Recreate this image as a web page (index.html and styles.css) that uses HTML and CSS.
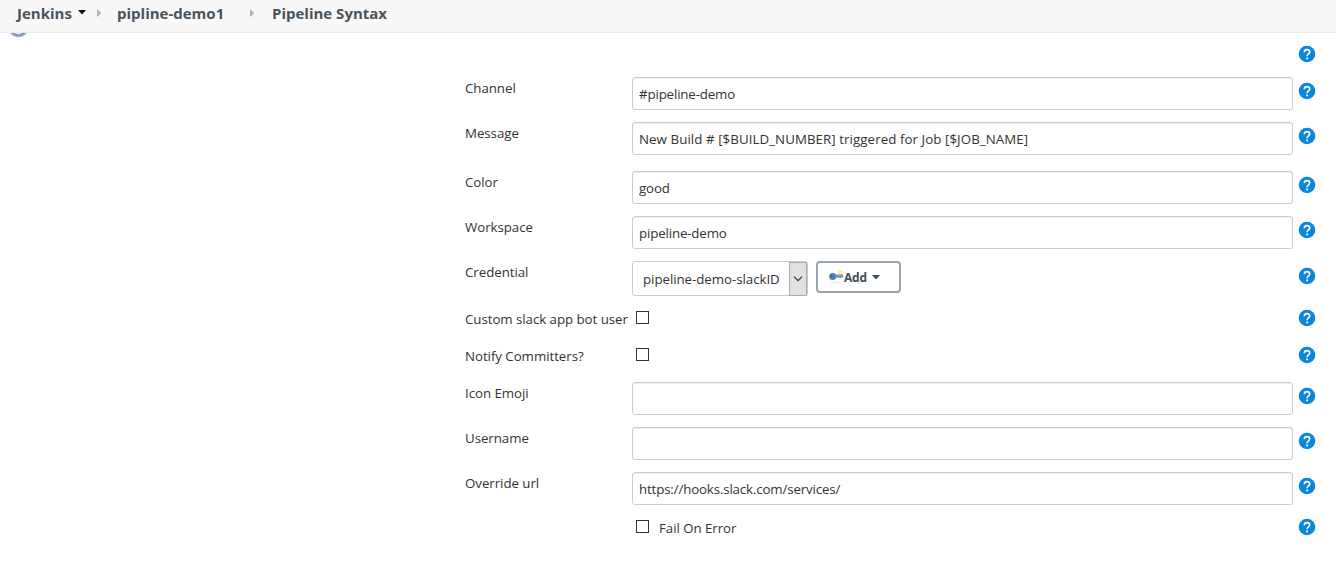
FILE: index.html
```
<!DOCTYPE html>
<html lang="en">
<head>
<meta charset="utf-8">
<title>Pipeline Syntax</title>
<link rel="stylesheet" href="styles.css">
</head>
<body>
<svg class="defs" width="0" height="0">
  <symbol id="help" viewBox="0 0 17 17">
    <circle cx="8" cy="8" r="8.300" fill="#0b87da"/>
    <path d="M5.300 6.200C5.300 4.500 6.500 3.600 8 3.600s2.700.9 2.700 2.400c0 1.900-2.600 1.900-2.600 4.200" fill="none" stroke="#fff" stroke-width="1.600"/>
    <rect x="7.200" y="11.500" width="1.800" height="1.800" fill="#fff"/>
  </symbol>
</svg>
<header class="crumbs">
  <span class="c1">Jenkins</span>
  <svg class="caret" width="8" height="5"><path d="M0 0h8L4 4.5z" fill="#111"/></svg>
  <svg class="sep s1" width="5" height="8"><path d="M0 0l4.5 4L0 8z" fill="#b8b5b0"/></svg>
  <span class="c2">pipline-demo1</span>
  <svg class="sep s2" width="5" height="8"><path d="M0 0l4.5 4L0 8z" fill="#b8b5b0"/></svg>
  <span class="c3">Pipeline Syntax</span>
</header>
<svg class="side-icon" width="18" height="5" viewBox="0 0 18 5"><path d="M0 0h17Q14 4.3 8.500 4.300T0 0z" fill="#aeb9c8"/><path d="M2.500 0q6 4.400 12 0" fill="none" stroke="#5478ae"/><path d="M5 0h7L8.500 1.500z" fill="#edf2f8"/></svg>
<main class="form">
  <div class="row first"><svg class="help"><use href="#help"/></svg></div>
  <div class="row"><label class="label">Channel</label><div class="input">#pipeline-demo</div><svg class="help"><use href="#help"/></svg></div>
  <div class="row tall"><label class="label">Message</label><div class="input message">New Build # [$BUILD_NUMBER] triggered for Job [$JOB_NAME]</div><svg class="help"><use href="#help"/></svg></div>
  <div class="row"><label class="label">Color</label><div class="input">good</div><svg class="help"><use href="#help"/></svg></div>
  <div class="row"><label class="label">Workspace</label><div class="input">pipeline-demo</div><svg class="help"><use href="#help"/></svg></div>
  <div class="row cred"><label class="label">Credential</label>
    <div class="controls">
      <div class="select"><span>pipeline-demo-slackID</span><i class="arrow"><svg width="10" height="6"><path d="M1 .7l4 4 4-4" fill="none" stroke="#333" stroke-width="1.200"/></svg></i></div>
      <div class="add">
        <svg width="15" height="14" viewBox="0 0 15 14"><ellipse cx="6.500" cy="12.500" rx="5.500" ry=".9" fill="#ececec"/><circle cx="11.500" cy="2.800" r="2.500" fill="#fff45e"/><circle cx="11.500" cy="2.800" r=".9" fill="#fffce0"/><path d="M6 4.500h7.500l1 1.500-1 1.500h-1.500l-.8 1-.9-1H6z" fill="#5787bf"/><circle cx="3.700" cy="6.500" r="3.500" fill="#4b7cbc"/><circle cx="2.300" cy="5.800" r=".8" fill="#28579c"/><path d="M6.500 5.700h6.500" stroke="#a1bcdb" stroke-width=".8"/></svg>
        <b>Add</b>
        <svg class="down" width="8" height="5"><path d="M0 0h8L4 4.500z" fill="#444d54"/></svg>
      </div>
    </div>
    <svg class="help"><use href="#help"/></svg></div>
  <div class="row check"><label class="label">Custom slack app bot user</label><div class="controls"><i class="box"></i></div><svg class="help"><use href="#help"/></svg></div>
  <div class="row check last-check"><label class="label">Notify Committers?</label><div class="controls"><i class="box"></i></div><svg class="help"><use href="#help"/></svg></div>
  <div class="row"><label class="label">Icon Emoji</label><div class="input"></div><svg class="help"><use href="#help"/></svg></div>
  <div class="row"><label class="label">Username</label><div class="input"></div><svg class="help"><use href="#help"/></svg></div>
  <div class="row url"><label class="label">Override url</label><div class="input">https://hooks.slack.com/services/</div><svg class="help"><use href="#help"/></svg></div>
  <div class="row check"><span></span><div class="controls"><i class="box"></i><span class="fail">Fail On Error</span></div><svg class="help"><use href="#help"/></svg></div>
</main>
</body>
</html>
```
FILE: styles.css
```
* { box-sizing: border-box; }
body {
  margin: 0;
  height: 580px;
  overflow: hidden;
  background: #fff;
  color: #333;
  font: 13.3px/20px "Open Sans", "Noto Sans", sans-serif;
  letter-spacing: -.05px;
}
svg { display: block; flex: none; }
.defs { position: absolute; }
.crumbs {
  display: flex;
  height: 33px;
  padding: 3px 0 0 17px;
  background: #f8f8f8;
  border-bottom: 1px solid #e4edf3;
  color: #4a535d;
  font-size: 15px;
  font-weight: 700;
  letter-spacing: 0;
  white-space: nowrap;
}
.c1 { width: 61px; }
.caret { margin-top: 7px; }
.sep { margin-top: 6px; }
.s1 { margin-left: 11px; }
.c2 { margin-left: 15px; width: 133px; }
.c3 { margin-left: 17px; }
.side-icon { margin-left: 10px; height: 5px; }
.form { margin-top: -5px; }
.row {
  display: grid;
  grid-template-columns: 167px 661px 17px;
  align-items: start;
  height: 45px;
  padding-left: 465px;
}
.first { height: 44px; }
.tall { height: 49px; }
.url { height: 43px; }
.check { height: 37px; }
.last-check { height: 39px; }
.label { margin-top: 1px; white-space: nowrap; }
.check .label { margin-top: 3px; }
.help { grid-column: 3; width: 17px; height: 17px; margin: 6px 0 0 6px; overflow: visible; }
.help use { overflow: visible; }
#help { overflow: visible; }
.first .help { margin-top: 13px; }
.cred .help { margin-top: 7px; }
.check .help { margin-top: 4px; }
.input {
  height: 33px;
  padding: 7px 6px;
  border: 1px solid #ccc;
  border-radius: 3px;
  box-shadow: inset 0 1px 1px rgba(0, 0, 0, .075);
  line-height: 19px;
  white-space: nowrap;
  letter-spacing: -.15px;
}
.message { letter-spacing: .07px; }
.controls { display: flex; align-items: flex-start; }
.select {
  display: flex;
  width: 176px;
  height: 35px;
  padding-left: 10px;
  border: 1px solid #ccc;
  border-radius: 3px;
  line-height: 35px;
  white-space: nowrap;
}
.select span { width: 147px; }
.arrow {
  display: flex;
  align-items: center;
  justify-content: center;
  width: 18px;
  height: 34px;
  background: #e1e1e1;
  border: 1px solid #adadad;
}
.add {
  display: flex;
  width: 85px;
  height: 32px;
  margin-left: 8px;
  padding: 7px 0 0 11px;
  border: 2px solid #98a5af;
  border-radius: 4px;
  color: #444d54;
  font-size: 12px;
  line-height: 15px;
  letter-spacing: -.2px;
}
.down { margin: 5px 0 0 5px; }
.box { width: 13px; height: 13px; margin: 5px 0 0 4px; border: 1px solid #333; }
.fail { margin: 3px 0 0 10px; }
```
